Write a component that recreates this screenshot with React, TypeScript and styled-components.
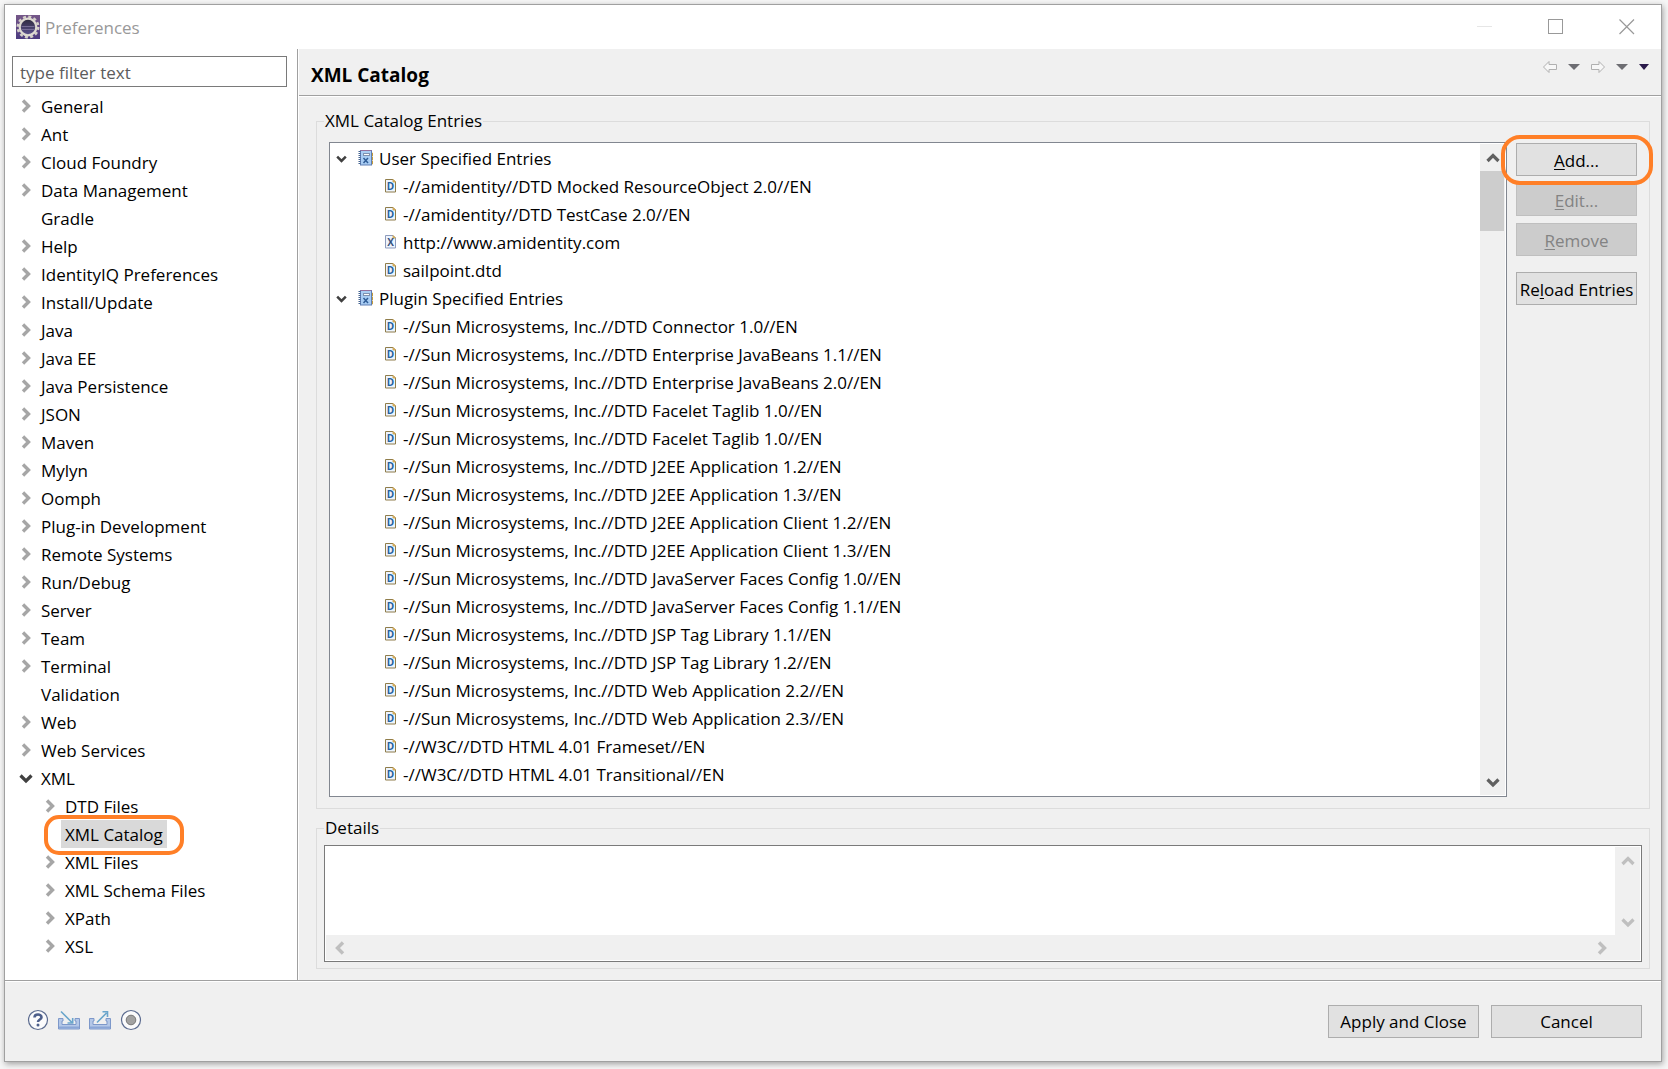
import React from "react";
import styled, { createGlobalStyle, css } from "styled-components";

const GlobalStyle = createGlobalStyle`
  *, *::before, *::after { box-sizing: border-box; }
  body {
    margin: 0;
    background: #f6f6f6;
    color: #000;
    font-family: "Open Sans", "Noto Sans", sans-serif;
    font-size: 17px;
    line-height: 28px;
  }
  button, input, textarea { font: inherit; color: inherit; }
`;

const Desktop = styled.div`
  display: flex;
  min-height: 100vh;
  padding: 4px 6px 7px 4px;
`;

const Window = styled.div`
  flex: 1;
  min-width: 0;
  display: flex;
  flex-direction: column;
  border: 1px solid #a0a0a0;
  background: #fff;
  box-shadow: 1px 2px 6px rgba(0, 0, 0, 0.35);
`;

const TitleBar = styled.header`
  display: flex;
  align-items: center;
  height: 44px;
  padding: 0 18px 0 11px;
  color: #999;
`;

const WindowTitle = styled.span`
  flex: 1;
  padding: 2px 0 0 5px;
`;

const IconButton = styled.button`
  display: flex;
  align-items: center;
  justify-content: center;
  padding: 0;
  border: 0;
  background: none;
`;

const WindowButtons = styled.div`
  display: flex;
  gap: 39px;
  ${IconButton} { width: 32px; height: 32px; }
`;

const Body = styled.div`
  flex: 1;
  display: flex;
`;

const Sidebar = styled.nav`
  width: 293px;
  flex: none;
  padding: 7px 10px 20px 0;
  border-right: 1px solid #a0a0a0;
`;

const FilterInput = styled.input`
  display: block;
  width: 275px;
  height: 31px;
  margin: 0 0 5px 7px;
  padding: 2px 7px 0;
  border: 1px solid #7a7a7a;
  background: #fff;
  &::placeholder { color: #5c5c5c; opacity: 1; }
`;

const Tree = styled.ul`
  list-style: none;
  margin: 0;
  padding: 0;
`;

const TreeRow = styled.li<{ $level: number }>`
  display: flex;
  align-items: center;
  height: 28px;
  padding-left: ${(p) => 13 + p.$level * 24}px;
  white-space: nowrap;
`;

const Twisty = styled.span`
  display: flex;
  justify-content: center;
  width: 16px;
  margin-right: 3px;
`;

const RowLabel = styled.span<{ $selected?: boolean }>`
  position: relative;
  height: 28px;
  padding: 1px 4px 0;
  ${(p) => p.$selected && css`background: #d9d9d9;`}
`;

const Highlight = styled.span<{ $inset: string; $radius: number }>`
  position: absolute;
  z-index: 2;
  inset: ${(p) => p.$inset};
  border: 4px solid #ff7f27;
  border-radius: ${(p) => p.$radius}px;
  pointer-events: none;
`;

const Page = styled.main`
  flex: 1;
  min-width: 0;
  display: flex;
  flex-direction: column;
  background: #f0f0f0;
  border-left: 1px solid #fff;
`;

const PageHeader = styled.div`
  display: flex;
  justify-content: space-between;
  height: 47px;
  padding: 0 12px 0 12px;
  border-bottom: 1px solid #a0a0a0;
  box-shadow: 0 1px 0 #fff;
`;

const PageTitle = styled.h1`
  margin: 0;
  padding-top: 12px;
  font-size: 19px;
  font-weight: 700;
  line-height: 28px;
`;

const NavTools = styled.div`
  display: flex;
  align-items: center;
  gap: 11px;
  height: 36px;
`;

const PageContent = styled.div`
  flex: 1;
  display: flex;
  flex-direction: column;
  gap: 5px;
  padding: 11px 11px 11px 17px;
`;

const Group = styled.fieldset<{ $grow?: boolean }>`
  display: flex;
  flex-direction: column;
  min-width: 0;
  margin: 0;
  padding: 3px 7px 6px;
  border: 1px solid #dcdcdc;
  ${(p) => p.$grow && css`flex: 1;`}
`;

const Legend = styled.legend`
  padding: 0 1px;
`;

const CatalogArea = styled.div`
  flex: 1;
  display: flex;
  align-items: stretch;
  gap: 9px;
  margin: 4px 5px 5px;
`;

const CatalogBox = styled.div`
  flex: 1;
  min-width: 0;
  display: flex;
  padding: 1px;
  border: 1px solid #828790;
  background: #fff;
`;

const CatalogTree = styled.ul`
  flex: 1;
  min-width: 0;
  list-style: none;
  margin: 0;
  padding: 0 0 4px;
  overflow: hidden;
`;

const CatalogRow = styled.li<{ $child?: boolean }>`
  display: flex;
  align-items: center;
  height: 28px;
  padding-left: ${(p) => (p.$child ? 54 : 2)}px;
  white-space: nowrap;
  ${Twisty} { width: 16px; margin-right: 9px; }
`;

const EntryLabel = styled.span<{ $child?: boolean }>`
  padding: 1px 0 0 ${(p) => (p.$child ? 6 : 5)}px;
`;

const ScrollBar = styled.div<{ $horizontal?: boolean }>`
  display: flex;
  flex: none;
  justify-content: space-between;
  background: #f0f0f0;
  ${(p) => p.$horizontal
    ? css`height: 25px; padding-right: 25px; ${IconButton} { width: 27px; }`
    : css`width: 25px; flex-direction: column; ${IconButton} { height: 27px; }`}
`;

const ScrollTrack = styled.div`
  flex: 1;
`;

const ScrollThumb = styled.div`
  width: 24px;
  height: 60px;
  background: #cdcdcd;
`;

const ButtonColumn = styled.div`
  width: 121px;
  display: flex;
  flex-direction: column;
  gap: 7px;
  padding-top: 1px;
`;

const PushButton = styled.button<{ $spaced?: boolean }>`
  position: relative;
  height: 33px;
  padding: 2px 0 0;
  border: 1px solid #adadad;
  background: #e1e1e1;
  line-height: 28px;
  white-space: nowrap;
  ${(p) => p.$spaced && css`margin-top: 9px;`}
  &:disabled { background: #ccc; border-color: #bfbfbf; color: #838383; }
`;

const Mnemonic = styled.span`
  text-decoration: underline;
  text-decoration-thickness: 1px;
  text-underline-offset: 2px;
`;

const DetailsBox = styled.div`
  display: flex;
  flex-direction: column;
  padding: 1px;
  border: 1px solid #7a7a7a;
  background: #fff;
`;

const DetailsRow = styled.div`
  display: flex;
`;

const DetailsText = styled.textarea`
  flex: 1;
  min-width: 0;
  height: 88px;
  padding: 2px 4px;
  border: 0;
  resize: none;
  overflow: hidden;
  background: #fff;
`;

const Footer = styled.footer`
  display: flex;
  align-items: center;
  justify-content: space-between;
  height: 81px;
  padding: 0 19px 0 22px;
  border-top: 1px solid #a0a0a0;
  box-shadow: inset 0 1px 0 #fff;
  background: #f0f0f0;
`;

const FooterIcons = styled.div`
  display: flex;
  gap: 9px;
  padding-bottom: 2px;
  ${IconButton} { width: 22px; height: 24px; }
`;

const FooterButtons = styled.div`
  display: flex;
  gap: 12px;
  ${PushButton} { width: 151px; }
`;

const EclipseIcon = () => (
  <svg width="24" height="24" viewBox="0 0 24 24" aria-hidden="true">
    <defs>
      <linearGradient id="purple" x1="0" y1="0" x2="0" y2="1">
        <stop offset="0" stopColor="#755788" />
        <stop offset="1" stopColor="#4c3b80" />
      </linearGradient>
      <linearGradient id="core" x1="0" y1="0" x2="0" y2="1">
        <stop offset="0" stopColor="#2d2a3c" />
        <stop offset="1" stopColor="#5c5190" />
      </linearGradient>
    </defs>
    <rect width="24" height="24" fill="url(#purple)" />
    <circle cx="12" cy="12" r="10.300" fill="none" stroke="#d4d0c8" strokeWidth="2.400" strokeDasharray="3 2.393" />
    <circle cx="12" cy="12" r="8.300" fill="url(#core)" stroke="#dedad2" strokeWidth="2.200" />
    <path d="M5.500 11.500h13M6 14.500h12" stroke="#82779f" strokeWidth="0.800" />
  </svg>
);

const chevrons = {
  right: "M2 1.500L7.500 7L2 12.500",
  left: "M8 1.500L2.500 7L8 12.500",
};

const SideChevron = ({ dir = "right", color = "#a6a6a6" }: { dir?: "right" | "left"; color?: string }) => (
  <svg width="10" height="14" viewBox="0 0 10 14" aria-hidden="true">
    <path d={chevrons[dir]} fill="none" stroke={color} strokeWidth="3.400" />
  </svg>
);

const VertChevron = ({ up, color = "#404040", size = 14 }: { up?: boolean; color?: string; size?: number }) => (
  <svg width={size} height={size} viewBox="0 0 14 14" aria-hidden="true">
    <path d={up ? "M1.500 10L7 4.500L12.500 10" : "M1.500 4.500L7 10L12.500 4.500"} fill="none" stroke={color} strokeWidth="3.200" />
  </svg>
);

const CatalogIcon = () => (
  <svg width="16" height="16" viewBox="0 0 16 16" aria-hidden="true">
    <path d="M13 3h1.500v3H13M13 7h1.500v3H13M13 11h1.500v3H13" fill="#f5d77a" stroke="#c39a3c" />
    <rect x="2.500" y="0.500" width="11" height="14.500" fill="#a9cdf4" stroke="#5f7fb5" />
    <path d="M2.500 0.500h11" stroke="#96709c" />
    <path d="M1.500 1v14" stroke="#43638f" strokeWidth="2" strokeDasharray="1 1" />
    <rect x="5.500" y="3.500" width="6" height="2" fill="#fff" stroke="#7f91b0" />
    <path d="M5.500 8l4.500 5M10 8l-4.500 5" stroke="#2f5c96" strokeWidth="1.500" />
  </svg>
);

const FileIcon = ({ letter }: { letter: string }) => (
  <svg width="12" height="16" viewBox="0 0 12 16" aria-hidden="true">
    <path d="M0.500 1.500h7.500l2.500 2.500v10h-10z" fill="#edf4fd" stroke={letter === "D" ? "#8f7d4b" : "#8d9bbd"} />
    <path d="M8 1.500v2.500h2.500z" fill="#e8c573" stroke="#c79b45" strokeWidth="0.800" />
    <text x="5.500" y="11.500" textAnchor="middle" fontSize="10" fontWeight="700" fontFamily="Open Sans, sans-serif" fill={letter === "D" ? "#24619f" : "#36507c"}>
      {letter}
    </text>
  </svg>
);

const NavArrow = ({ back }: { back?: boolean }) => (
  <svg width="14" height="12" viewBox="0 0 14 12" aria-hidden="true">
    <path
      d={back ? "M0.500 6L6 0.500V3.500H13.500V8.500H6V11.500z" : "M13.500 6L8 0.500V3.500H0.500V8.500H8V11.500z"}
      fill="#f7f7f7" stroke="#b0b0b0"
    />
  </svg>
);

const Triangle = ({ color, width = 12 }: { color: string; width?: number }) => (
  <svg width={width} height="6" viewBox="0 0 12 6" preserveAspectRatio="none" aria-hidden="true">
    <path d="M0 0h12L6 6z" fill={color} />
  </svg>
);

const HelpIcon = () => (
  <svg width="22" height="22" viewBox="0 0 22 22" aria-hidden="true">
    <circle cx="11" cy="11" r="9.500" fill="#fbfbfc" stroke="#5b6b8f" strokeWidth="1.200" />
    <path d="M7.500 8.500C7.500 4.600 14.500 4.600 14.500 8.300C14.500 10.500 11 10.500 11 13" fill="none" stroke="#4d5f8b" strokeWidth="2.600" />
    <circle cx="11" cy="16" r="1.500" fill="#4d5f8b" />
  </svg>
);

const TrayIcon = ({ out }: { out?: boolean }) => (
  <svg width="22" height="20" viewBox="0 0 22 20" aria-hidden="true">
    <path d="M0.500 8.500h4.500v2.500h-1v3.500h14v-3.500h-1v-2.500h4.500v10.500h-21z" fill="#b4c8e8" stroke="#7d98ca" />
    <path d="M1 17.500h20" stroke="#8ba6d6" strokeWidth="2" />
    {out ? (
      <path d="M8 12.500L17.500 3M13.500 1.800H18.500V7" fill="none" stroke="#6aa5cb" strokeWidth="1.600" />
    ) : (
      <path d="M3 1.500L14 12.500M14.700 8V13H9.500" fill="none" stroke="#6aa5cb" strokeWidth="1.600" />
    )}
  </svg>
);

const RecordIcon = () => (
  <svg width="22" height="22" viewBox="0 0 22 22" aria-hidden="true">
    <circle cx="11" cy="11" r="9.500" fill="#fbfbfc" stroke="#5b6b8f" strokeWidth="1.200" />
    <circle cx="11" cy="11" r="4.800" fill="#a2a2a2" stroke="#777" />
  </svg>
);

type Node = { label: string; level?: number; state?: "leaf" | "open"; selected?: boolean };

const preferences: Node[] = [
  { label: "General" }, { label: "Ant" }, { label: "Cloud Foundry" }, { label: "Data Management" },
  { label: "Gradle", state: "leaf" }, { label: "Help" }, { label: "IdentityIQ Preferences" },
  { label: "Install/Update" }, { label: "Java" }, { label: "Java EE" }, { label: "Java Persistence" },
  { label: "JSON" }, { label: "Maven" }, { label: "Mylyn" }, { label: "Oomph" },
  { label: "Plug-in Development" }, { label: "Remote Systems" }, { label: "Run/Debug" },
  { label: "Server" }, { label: "Team" }, { label: "Terminal" }, { label: "Validation", state: "leaf" },
  { label: "Web" }, { label: "Web Services" }, { label: "XML", state: "open" },
  { label: "DTD Files", level: 1 }, { label: "XML Catalog", level: 1, state: "leaf", selected: true },
  { label: "XML Files", level: 1 }, { label: "XML Schema Files", level: 1 },
  { label: "XPath", level: 1 }, { label: "XSL", level: 1 },
];

const sun = (name: string) => `-//Sun Microsystems, Inc.//DTD ${name}//EN`;

const catalog = [
  {
    title: "User Specified Entries",
    entries: ["-//amidentity//DTD Mocked ResourceObject 2.0//EN", "-//amidentity//DTD TestCase 2.0//EN", "http://www.amidentity.com", "sailpoint.dtd"],
  },
  {
    title: "Plugin Specified Entries",
    entries: [
      ...[
        "Connector 1.0", "Enterprise JavaBeans 1.1", "Enterprise JavaBeans 2.0", "Facelet Taglib 1.0",
        "Facelet Taglib 1.0", "J2EE Application 1.2", "J2EE Application 1.3", "J2EE Application Client 1.2",
        "J2EE Application Client 1.3", "JavaServer Faces Config 1.0", "JavaServer Faces Config 1.1",
        "JSP Tag Library 1.1", "JSP Tag Library 1.2", "Web Application 2.2", "Web Application 2.3",
      ].map(sun),
      "-//W3C//DTD HTML 4.01 Frameset//EN",
      "-//W3C//DTD HTML 4.01 Transitional//EN",
    ],
  },
];

export default function App() {
  return (
    <>
      <GlobalStyle />
      <Desktop>
        <Window>
          <TitleBar>
            <EclipseIcon />
            <WindowTitle>Preferences</WindowTitle>
            <WindowButtons>
              <IconButton aria-label="Minimize" disabled>
                <svg width="16" height="16"><path d="M0 7.500h15" stroke="#e6e6e6" /></svg>
              </IconButton>
              <IconButton aria-label="Maximize">
                <svg width="16" height="16"><rect x="0.500" y="0.500" width="14" height="14" fill="none" stroke="#999" /></svg>
              </IconButton>
              <IconButton aria-label="Close">
                <svg width="16" height="16"><path d="M0.500 0.500l14.500 14.500M15 0.500l-14.500 14.500" stroke="#999" strokeWidth="1.200" /></svg>
              </IconButton>
            </WindowButtons>
          </TitleBar>

          <Body>
            <Sidebar aria-label="Preference pages">
              <FilterInput type="text" placeholder="type filter text" aria-label="type filter text" />
              <Tree role="tree">
                {preferences.map(({ label, level = 0, state, selected }) => (
                  <TreeRow key={label} $level={level} role="treeitem" aria-selected={!!selected}>
                    <Twisty>
                      {state === "open" && <VertChevron />}
                      {!state && <SideChevron />}
                    </Twisty>
                    <RowLabel $selected={selected}>
                      {label}
                      {selected && <Highlight $inset="-5px -17px -7px -17px" $radius={15} />}
                    </RowLabel>
                  </TreeRow>
                ))}
              </Tree>
            </Sidebar>

            <Page>
              <PageHeader>
                <PageTitle>XML Catalog</PageTitle>
                <NavTools>
                  <IconButton aria-label="Back"><NavArrow back /></IconButton>
                  <IconButton aria-label="Back history"><Triangle color="#6d6d72" /></IconButton>
                  <IconButton aria-label="Forward"><NavArrow /></IconButton>
                  <IconButton aria-label="Forward history"><Triangle color="#6d6d72" /></IconButton>
                  <IconButton aria-label="Menu"><Triangle color="#2a1a4a" width={10} /></IconButton>
                </NavTools>
              </PageHeader>

              <PageContent>
                <Group $grow>
                  <Legend>XML Catalog Entries</Legend>
                  <CatalogArea>
                    <CatalogBox>
                      <CatalogTree role="tree">
                        {catalog.map(({ title, entries }) => (
                          <React.Fragment key={title}>
                            <CatalogRow role="treeitem" aria-expanded="true">
                              <Twisty><VertChevron size={11} /></Twisty>
                              <CatalogIcon />
                              <EntryLabel>{title}</EntryLabel>
                            </CatalogRow>
                            {entries.map((entry, i) => (
                              <CatalogRow key={i} $child role="treeitem">
                                <FileIcon letter={entry.startsWith("http") ? "X" : "D"} />
                                <EntryLabel $child>{entry}</EntryLabel>
                              </CatalogRow>
                            ))}
                          </React.Fragment>
                        ))}
                      </CatalogTree>
                      <ScrollBar>
                        <IconButton aria-label="Scroll up"><VertChevron up color="#606060" /></IconButton>
                        <ScrollTrack><ScrollThumb /></ScrollTrack>
                        <IconButton aria-label="Scroll down"><VertChevron color="#606060" /></IconButton>
                      </ScrollBar>
                    </CatalogBox>
                    <ButtonColumn>
                      <PushButton type="button">
                        <Mnemonic>A</Mnemonic>dd...
                        <Highlight $inset="-9px -17px -10px -16px" $radius={19} />
                      </PushButton>
                      <PushButton type="button" disabled><Mnemonic>E</Mnemonic>dit...</PushButton>
                      <PushButton type="button" disabled><Mnemonic>R</Mnemonic>emove</PushButton>
                      <PushButton type="button" $spaced>Re<Mnemonic>l</Mnemonic>oad Entries</PushButton>
                    </ButtonColumn>
                  </CatalogArea>
                </Group>

                <Group>
                  <Legend>Details</Legend>
                  <DetailsBox>
                    <DetailsRow>
                      <DetailsText readOnly aria-label="Details" />
                      <ScrollBar>
                        <IconButton aria-label="Scroll up" disabled><VertChevron up color="#bfbfbf" /></IconButton>
                        <IconButton aria-label="Scroll down" disabled><VertChevron color="#bfbfbf" /></IconButton>
                      </ScrollBar>
                    </DetailsRow>
                    <ScrollBar $horizontal>
                      <IconButton aria-label="Scroll left" disabled><SideChevron dir="left" color="#bfbfbf" /></IconButton>
                      <IconButton aria-label="Scroll right" disabled><SideChevron color="#bfbfbf" /></IconButton>
                    </ScrollBar>
                  </DetailsBox>
                </Group>
              </PageContent>
            </Page>
          </Body>

          <Footer>
            <FooterIcons>
              <IconButton aria-label="Help"><HelpIcon /></IconButton>
              <IconButton aria-label="Import"><TrayIcon /></IconButton>
              <IconButton aria-label="Export"><TrayIcon out /></IconButton>
              <IconButton aria-label="Record"><RecordIcon /></IconButton>
            </FooterIcons>
            <FooterButtons>
              <PushButton type="button">Apply and Close</PushButton>
              <PushButton type="button">Cancel</PushButton>
            </FooterButtons>
          </Footer>
        </Window>
      </Desktop>
    </>
  );
}
